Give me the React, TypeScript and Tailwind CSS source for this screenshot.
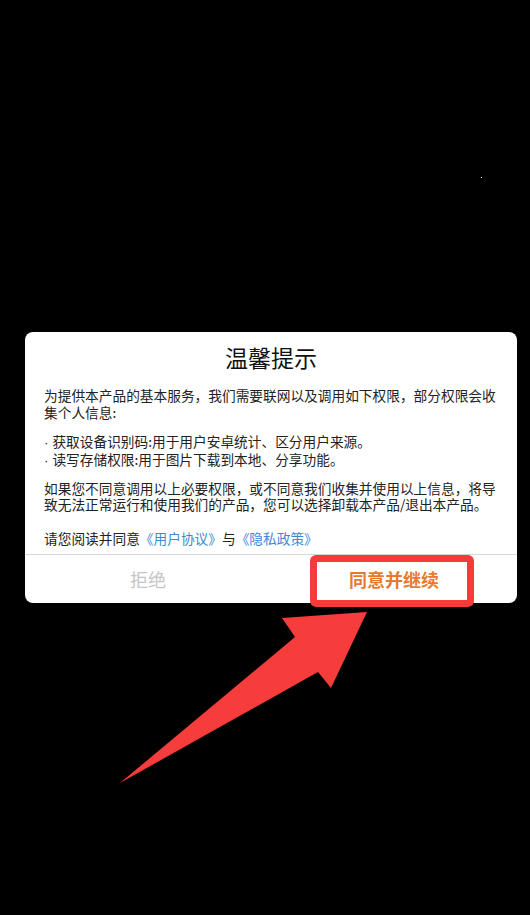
import React from "react";

const font = { fontFamily: '"Noto Sans CJK SC", "Noto Sans", sans-serif' };

function Bullet() {
    return <span className="leading-[8px]" style={{ fontFamily: '"Liberation Sans", sans-serif' }}>·&nbsp;</span>;
}

export default function App() {
    return (
        <div className="relative h-[915px] w-[530px] overflow-hidden bg-black" style={font}>
            <div className="absolute left-[481px] top-[177px] h-px w-px bg-white" />

            <div className="ml-[25px] mt-[332px] w-[492px] rounded-[8px] bg-white">
                <div className="pt-[10px] text-center text-[23px] leading-[30px] text-[#111]">温馨提示</div>
                <div className="mt-[15px] px-[19px] text-[13.7px] leading-[16.5px] text-[#222]">
                    <p>为提供本产品的基本服务，我们需要联网以及调用如下权限，部分权限会收集个人信息:</p>
                    <div className="mt-[13px] flex flex-col gap-[1.5px]">
                        <p><Bullet />获取设备识别码:用于用户安卓统计、区分用户来源。</p>
                        <p><Bullet />读写存储权限:用于图片下载到本地、分享功能。</p>
                    </div>
                    <p className="mt-[12px]">如果您不同意调用以上必要权限，或不同意我们收集并使用以上信息，将导致无法正常运行和使用我们的产品，您可以选择卸载本产品/退出本产品。</p>
                    <p className="mt-[17px]">
                        请您阅读并同意<span className="text-[#3a8ad6]">《用户协议》</span>与<span className="text-[#3a8ad6]">《隐私政策》</span>
                    </p>
                </div>
                <div className="mt-[8px] flex h-[49px] border-t border-[#d6d6d6]">
                    <div className="flex flex-1 items-center justify-center text-[18px] text-[#c6c6c6]">拒绝</div>
                    <div className="flex flex-1 items-center justify-center text-[18px] font-bold text-[#e8792e]">同意并继续</div>
                </div>
            </div>

            <div className="absolute left-[310px] top-[555px] h-[52px] w-[164px] rounded-[6px] border-[7px] border-[#f63b3b]" />

            <svg className="absolute left-0 top-0" width="530" height="915" viewBox="0 0 530 915">
                <polygon points="367,612 331,688 318,672 120,783 295,637 282,618" fill="#f73c3c" />
            </svg>
        </div>
    );
}
